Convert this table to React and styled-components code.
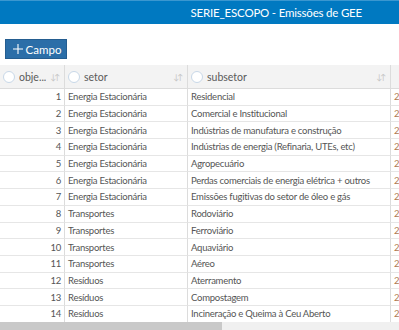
import React from "react";
import styled, { createGlobalStyle } from "styled-components";

const Global = createGlobalStyle`
  html, body { margin: 0; padding: 0; background: #fff; }
  body { font-family: Lato, "Open Sans", Arial, sans-serif; overflow: hidden; }
`;

const Page = styled.div`
  width: 399px;
  height: 330px;
  display: flex;
  flex-direction: column;
  overflow: hidden;
`;

const TitleBar = styled.div`
  height: 24px;
  background: #0079c1;
  border-top: 1px solid #3a97d0;
  box-sizing: border-box;
  display: flex;
  align-items: center;
  justify-content: flex-end;
  padding-right: 37px;
  color: #fff;
  font-size: 11.5px;
  letter-spacing: -0.2px;
`;

const Toolbar = styled.div`
  padding: 15px 0 0 5px;
  height: 41px;
  box-sizing: border-box;
`;

const AddButton = styled.button`
  height: 20px;
  width: 62px;
  background: #2b6ea8;
  border: 1px solid #245d90;
  color: #fff;
  font-family: inherit;
  font-size: 11.5px;
  display: flex;
  align-items: center;
  justify-content: center;
  gap: 3px;
  padding: 0 0 0 2px;
`;

const Grid = styled.div`
  display: grid;
  grid-template-columns: 65px 123px 203px 30px;
  font-size: 9.5px;
  letter-spacing: -0.25px;
  color: #555;
  flex: 1;
  overflow: hidden;
`;

const HeadCell = styled.div`
  height: 24px;
  background: #f3f3f3;
  border-right: 1px solid #dcdcdc;
  border-bottom: 1px solid #dcdcdc;
  box-sizing: border-box;
  display: flex;
  align-items: center;
  padding: 0 6px 0 3px;
  gap: 4px;
  font-size: 10.5px;
  letter-spacing: 0;
  color: #5a5a5a;
`;

const Ring = styled.span`
  width: 10px;
  height: 10px;
  border-radius: 50%;
  border: 1px solid #c8d8e8;
  background: #fff;
  flex: none;
`;

const Label = styled.span`
  flex: 1;
  white-space: nowrap;
  overflow: hidden;
`;

const Sort = styled.span`
  color: #c4c4c4;
  font-size: 8px;
  letter-spacing: -2px;
  flex: none;
`;

const Cell = styled.div`
  height: 16.7px;
  border-right: 1px solid #dcdcdc;
  border-bottom: 1px solid #e6e6e6;
  box-sizing: border-box;
  display: flex;
  align-items: center;
  justify-content: ${(p) => (p.$num ? "flex-end" : "flex-start")};
  padding: ${(p) => (p.$num ? "0 3px 0 0" : "0 0 0 3px")};
  white-space: nowrap;
  overflow: hidden;
  color: ${(p) => (p.$tail ? "#b07a50" : "#555")};
`;

const ScrollTrack = styled.div`
  height: 8px;
  background: #f0f0f0;
  display: flex;
`;

const ScrollThumb = styled.div`
  width: 222px;
  background: #c9c9c9;
`;

const rows = [
  ["Energia Estacionária", "Residencial"],
  ["Energia Estacionária", "Comercial e Institucional"],
  ["Energia Estacionária", "Indústrias de manufatura e construção"],
  ["Energia Estacionária", "Indústrias de energia (Refinaria, UTEs, etc)"],
  ["Energia Estacionária", "Agropecuário"],
  ["Energia Estacionária", "Perdas comerciais de energia elétrica + outros"],
  ["Energia Estacionária", "Emissões fugitivas do setor de óleo e gás"],
  ["Transportes", "Rodoviário"],
  ["Transportes", "Ferroviário"],
  ["Transportes", "Aquaviário"],
  ["Transportes", "Aéreo"],
  ["Resíduos", "Aterramento"],
  ["Resíduos", "Compostagem"],
  ["Resíduos", "Incineração e Queima à Ceu Aberto"],
];

const headers = ["obje...", "setor", "subsetor"];

export default function App() {
  return (
    <Page>
      <Global />
      <TitleBar>SERIE_ESCOPO - Emissões de GEE</TitleBar>
      <Toolbar>
        <AddButton>
          <svg width="10" height="10" viewBox="0 0 10 10">
            <path d="M5 0v10M0 5h10" stroke="#fff" strokeWidth="1.1" />
          </svg>
          Campo
        </AddButton>
      </Toolbar>
      <Grid>
        {headers.map((h) => (
          <HeadCell key={h}>
            <Ring />
            <Label>{h}</Label>
            <Sort>↓↑</Sort>
          </HeadCell>
        ))}
        <HeadCell />
        {rows.map(([a, b], i) => (
          <React.Fragment key={i}>
            <Cell $num>{i + 1}</Cell>
            <Cell>{a}</Cell>
            <Cell>{b}</Cell>
            <Cell $tail>2</Cell>
          </React.Fragment>
        ))}
      </Grid>
      <ScrollTrack>
        <ScrollThumb />
      </ScrollTrack>
    </Page>
  );
}
